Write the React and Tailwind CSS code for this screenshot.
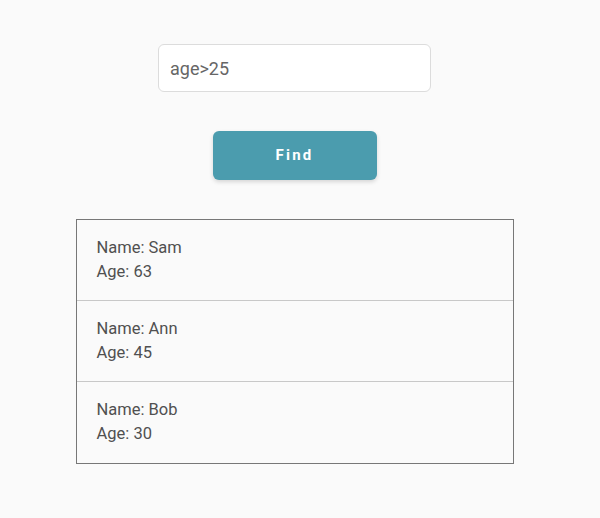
import React, { useState } from "react";

const people = [
  { name: "Sam", age: 63 },
  { name: "Ann", age: 45 },
  { name: "Bob", age: 30 },
];

const App = () => {
  const [query, setQuery] = useState("age>25");

  return (
    <div className="min-h-screen bg-[#fafafa] font-['Roboto',sans-serif]">
      <div className="w-[589px] flex flex-col items-center pt-[44px]">
        <input
          value={query}
          onChange={(e) => setQuery(e.target.value)}
          className="w-[273px] h-[48px] pl-[11px] bg-white border border-[#dcdcdc] rounded-md text-[18px] text-[#666] outline-none"
        />
        <button className="mt-[39px] w-[164px] h-[49px] rounded-md bg-[#4b9cae] text-white text-[15px] font-bold tracking-[0.15em] shadow-[0_2px_4px_rgba(0,0,0,0.15)]">
          Find
        </button>
        <div className="mt-[39px] w-[438px] h-[245px] border border-[#777]">
          {people.map((p, i) => (
            <div
              key={p.name}
              className={`px-5 py-4 text-[16.5px] leading-6 text-[#505050] ${
                i > 0 ? "border-t border-[#c8c8c8]" : ""
              }`}
            >
              <div>Name: {p.name}</div>
              <div>Age: {p.age}</div>
            </div>
          ))}
        </div>
      </div>
    </div>
  );
};

export default App;
